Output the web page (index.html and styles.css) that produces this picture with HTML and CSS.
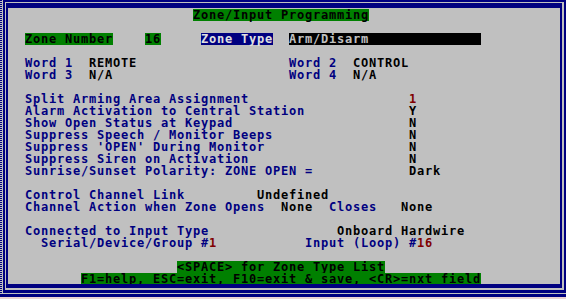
FILE: index.html
```html
<!DOCTYPE html>
<html lang="en">
<head>
  <meta charset="UTF-8">
  <title>Zone/Input Programming</title>
  <link rel="stylesheet" href="styles.css">
</head>
<body>

  <div class="frame">
    <div class="box-outer">
      <div class="box-inner">

        <!-- Title -->
        <div class="row">                       <span class="hl-green">Zone/Input Programming</span></div>
        <div class="row"></div>

        <!-- Zone header -->
        <div class="row">  <span class="hl-green">Zone Number</span>    <span class="hl-green">16</span>     <span class="hl-navy">Zone Type</span>  <span class="hl-black">Arm/Disarm              </span></div>
        <div class="row"></div>

        <!-- Words -->
        <div class="row">  <span class="lbl">Word 1</span>  REMOTE                   <span class="lbl">Word 2</span>  CONTROL</div>
        <div class="row">  <span class="lbl">Word 3</span>  N/A                      <span class="lbl">Word 4</span>  N/A</div>
        <div class="row"></div>

        <!-- Options -->
        <div class="row">  <span class="lbl">Split Arming Area Assignment</span>                    <span class="num">1</span></div>
        <div class="row">  <span class="lbl">Alarm Activation to Central Station</span>             Y</div>
        <div class="row">  <span class="lbl">Show Open Status at Keypad</span>                      N</div>
        <div class="row">  <span class="lbl">Suppress Speech / Monitor Beeps</span>                 N</div>
        <div class="row">  <span class="lbl">Suppress 'OPEN' During Monitor</span>                  N</div>
        <div class="row">  <span class="lbl">Suppress Siren on Activation</span>                    N</div>
        <div class="row">  <span class="lbl">Sunrise/Sunset Polarity: ZONE OPEN =</span>            Dark</div>
        <div class="row"></div>

        <!-- Control channel -->
        <div class="row">  <span class="lbl">Control Channel Link</span>         Undefined</div>
        <div class="row">  <span class="lbl">Channel Action when Zone Opens</span>  None  <span class="lbl">Closes</span>   None</div>
        <div class="row"></div>

        <!-- Input -->
        <div class="row">  <span class="lbl">Connected to Input Type</span>                Onboard Hardwire</div>
        <div class="row">    <span class="lbl">Serial/Device/Group #</span><span class="num">1</span>           <span class="lbl">Input (Loop) #</span><span class="num">16</span></div>
        <div class="row"></div>

        <!-- Help lines -->
        <div class="row">                     <span class="hl-green">&lt;SPACE&gt; for Zone Type List</span></div>
        <div class="row">         <span class="hl-green">F1=help, ESC=exit, F10=exit &amp; save, &lt;CR&gt;=nxt field</span></div>

      </div>
    </div>
  </div>

</body>
</html>
```

FILE: styles.css
```css
body {
  margin: 0;
  background-color: #ecd4d4;
}

.frame {
  width: 566px;
  height: 297px;
  box-sizing: border-box;
  padding-left: 3px;
  padding-bottom: 1px;
  border-bottom: 3px solid #000080;
  background-color: #c0c0c0;
  background-image: repeating-linear-gradient(to bottom, #000080 0 1px, #c0c0c0 1px 2px);
  background-size: 2px 100%;
  background-repeat: no-repeat;
}

.box-outer {
  height: 100%;
  box-sizing: border-box;
  border-style: solid;
  border-color: #000080;
  border-width: 2px 2px 3px 2px;
  padding: 1px 2px 2px 1px;
}

.box-inner {
  height: 100%;
  box-sizing: border-box;
  border-style: solid;
  border-color: #000080;
  border-width: 5px 2px 4px 2px;
  padding: 1px 0 0 1px;
  overflow: hidden;
  font-family: "DejaVu Sans Mono", monospace;
  font-weight: bold;
  font-size: 12px;
  letter-spacing: 0.775px;
  line-height: 12px;
  color: #000000;
}

.row {
  height: 12px;
  white-space: pre;
}

.lbl {
  color: #000080;
}

.num {
  color: #800000;
}

.hl-green,
.hl-navy,
.hl-black {
  display: inline-block;
  height: 12px;
  vertical-align: top;
}

.hl-green {
  background-color: #008000;
  color: #000000;
}

.hl-navy {
  background-color: #000080;
  color: #e0e0e0;
}

.hl-black {
  background-color: #000000;
  color: #c0c0c0;
}
```
